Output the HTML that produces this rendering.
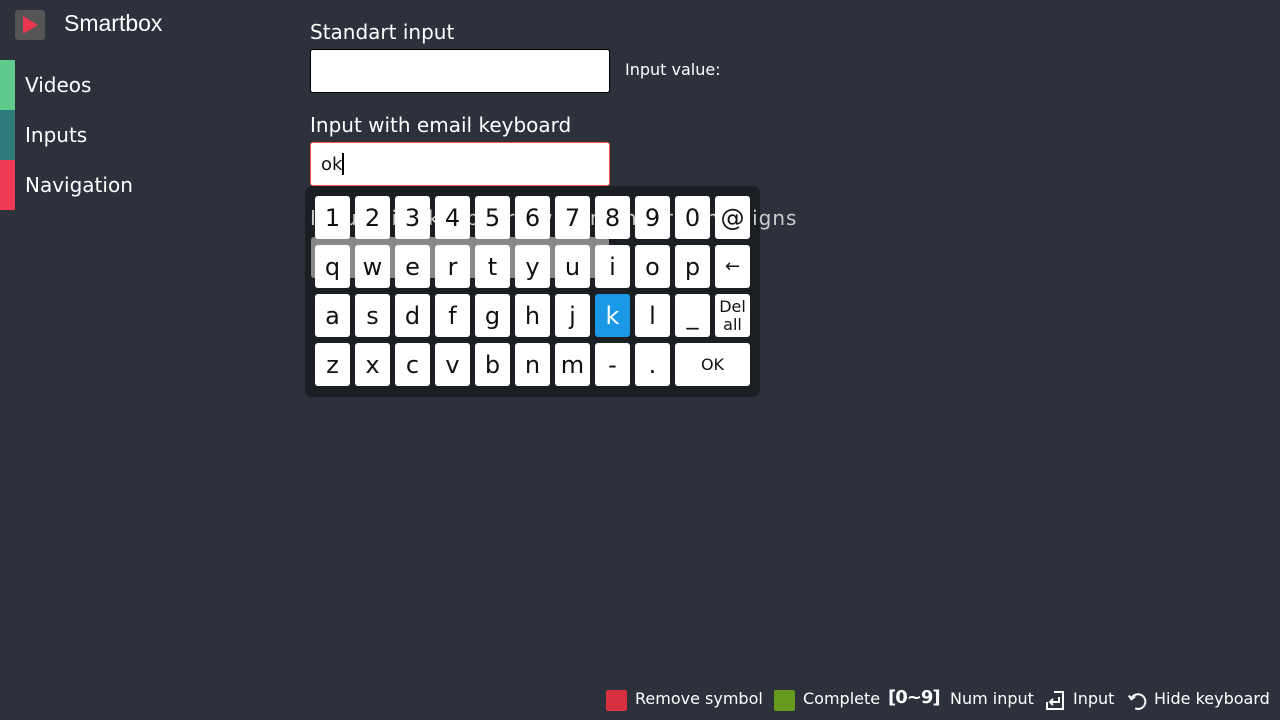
<!DOCTYPE html><html><head><style>
body{margin:0;width:1280px;height:720px;background:#2c313b;font-family:"DejaVu Sans","Liberation Sans",sans-serif;color:#fff;position:relative;overflow:hidden}
.a{position:absolute}
.lbl{font-size:20px}
.inp{position:absolute;left:310px;width:298px;height:42px;background:#fff;border-radius:3px;border:1px solid #000}
.k{position:absolute;width:35px;height:43px;background:#fff;border-radius:3px;color:#111;font-size:24px;text-align:center;line-height:44px}
.nav{position:absolute;left:0;width:15px;height:50px}
.nt{position:absolute;left:25px;font-size:20px}
.ft{position:absolute;top:689px;font-size:16px}
</style></head><body>
<div class="a" style="left:15px;top:10px;width:30px;height:30px;background:#555;border-radius:3px"></div>
<div class="a" style="left:23px;top:16px;width:0;height:0;border-left:15px solid #e8364f;border-top:9px solid transparent;border-bottom:9px solid transparent"></div>
<div class="a" style="left:64px;top:10px;font-size:23px;font-family:'Liberation Sans',sans-serif">Smartbox</div>
<div class="nav" style="top:60px;background:#5ecb8d"></div><div class="nt" style="top:73px">Videos</div>
<div class="nav" style="top:110px;background:#2f7a7a"></div><div class="nt" style="top:123px">Inputs</div>
<div class="nav" style="top:160px;background:#ee3a55"></div><div class="nt" style="top:173px">Navigation</div>
<div class="a lbl" style="left:310px;top:20px">Standart input</div>
<div class="inp" style="top:49px"></div>
<div class="a" style="left:625px;top:60px;font-size:16px">Input value:</div>
<div class="a lbl" style="left:310px;top:113px">Input with email keyboard</div>
<div class="inp" style="top:142px;border-color:#f55"></div>
<div class="a" style="left:321px;top:153px;color:#111;font-size:18px">ok<span style="display:inline-block;width:2px;height:22px;background:#000;vertical-align:-5px"></span></div>
<div class="a" style="left:305px;top:186px;width:455px;height:211px;background:#1b1e23;border-radius:7px"></div>
<div class="a lbl" style="left:310px;top:206px;color:#ccc;letter-spacing:1px">Input with keyboard with numbers and signs</div>
<div class="a" style="left:311px;top:237px;width:298px;height:41px;background:#888;border-radius:3px"></div>
<div id="kb"></div>
<script>
var rows=[["1","2","3","4","5","6","7","8","9","0","@"],["q","w","e","r","t","y","u","i","o","p","←"],["a","s","d","f","g","h","j","k","l","_","Del<br>all"],["z","x","c","v","b","n","m","-","."]];
var h="";rows.forEach(function(r,ri){r.forEach(function(c,ci){var st="left:"+(315+ci*40)+"px;top:"+(196+ri*49)+"px;";if(c=="k")st+="background:#1a97e5;color:#fff;";if(c.indexOf("Del")==0)st+="font-size:16px;line-height:18px;padding-top:4px;height:39px;";if(c=="←")st+="font-size:18px;";h+='<div class="k" style="'+st+'">'+c+'</div>';});});
h+='<div class="k" style="left:675px;top:343px;width:75px;font-size:16px">OK</div>';
document.getElementById("kb").innerHTML=h;
</script>
<div class="a" style="left:606px;top:690px;width:21px;height:21px;background:#d8303f;border-radius:2px"></div>
<div class="ft" style="left:635px">Remove symbol</div>
<div class="a" style="left:774px;top:690px;width:21px;height:21px;background:#66991e;border-radius:2px"></div>
<div class="ft" style="left:803px">Complete</div>
<div class="ft" style="left:888px;font-size:18px;top:687px;font-weight:bold;letter-spacing:-1px">[0~9]</div>
<div class="ft" style="left:950px">Num input</div>
<svg class="a" style="left:1044px;top:689px" width="24" height="24" viewBox="0 0 24 24" fill="none" stroke="#fff" stroke-width="2"><path d="M10 3H19V20H3V13"/><path d="M15 8V13H6M9 10L6 13L9 16"/></svg>
<div class="ft" style="left:1073px">Input</div>
<svg class="a" style="left:1126px;top:690px" width="22" height="22" viewBox="0 0 24 24" fill="none" stroke="#fff" stroke-width="2.2"><path d="M6 9A8 8 0 1 1 10 20"/><path d="M3 6L6 10L10 7"/></svg>
<div class="ft" style="left:1154px">Hide keyboard</div>
</body></html>
